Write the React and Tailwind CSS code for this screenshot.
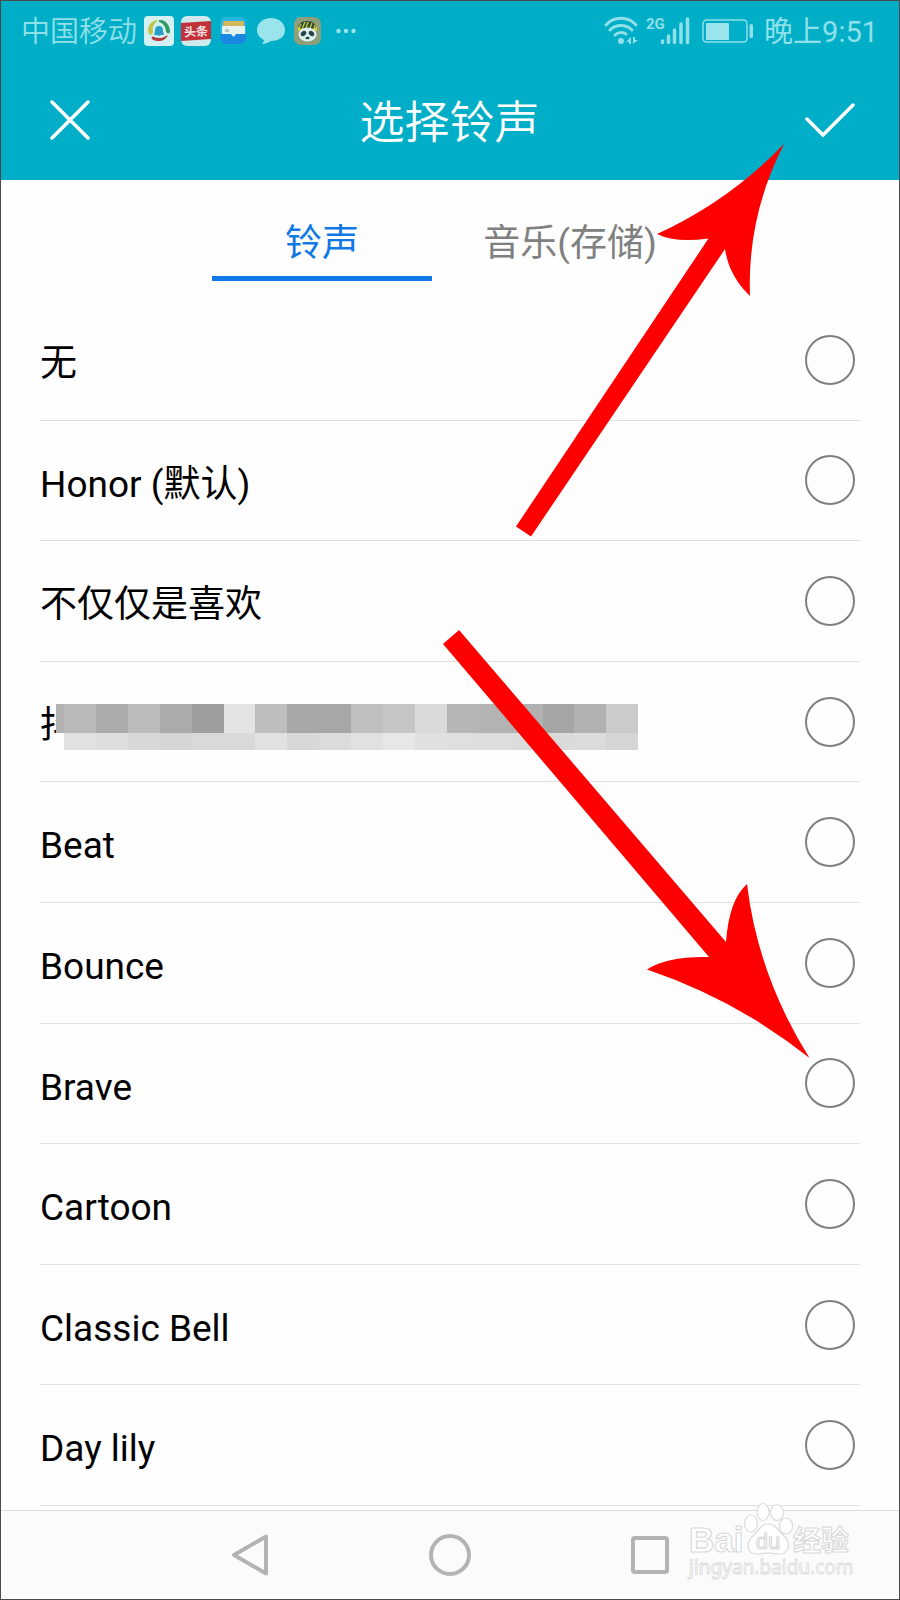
import { useState } from "react";

const RINGTONES = [
  { id: "none", label: "无" },
  { id: "honor", label: "Honor (默认)" },
  { id: "like", label: "不仅仅是喜欢" },
  { id: "hidden", label: "抖", masked: true },
  { id: "beat", label: "Beat" },
  { id: "bounce", label: "Bounce" },
  { id: "brave", label: "Brave" },
  { id: "cartoon", label: "Cartoon" },
  { id: "classic", label: "Classic Bell" },
  { id: "daylily", label: "Day lily" },
];

const MOSAIC_TOP = [
  "#b9b9b9", "#ababab", "#bcbcbc", "#ababab", "#9e9e9e", "#e3e3e3", "#bebebe", "#a7a7a7", "#a7a7a7",
  "#bfbfbf", "#c5c5c5", "#dadada", "#b6b6b6", "#b3b3b3", "#b1b1b1", "#a6a6a6", "#b1b1b1", "#cbcbcb",
];
const MOSAIC_BOTTOM = [
  "#e1e1e1", "#dedede", "#d8d8d8", "#d5d5d5", "#d9d9d9", "#d9d9d9", "#e1e1e1", "#d7d7d7", "#dbdbdb",
  "#e1e1e1", "#e7e7e7", "#e0e0e0", "#dfdfdf", "#dddddd", "#dcdcdc", "#dadada", "#dcdcdc", "#d5d5d5",
];

function Mosaic() {
  return (
    <svg
      viewBox="0 0 582 56"
      className="absolute top-0 left-4 h-14 w-[582px] max-w-none"
      shapeRendering="crispEdges"
      aria-hidden="true"
    >
      <rect x="0" y="10" width="8" height="29" fill="#b2b2b2" />
      <rect x="0" y="39" width="8" height="17" fill="#fefefe" />
      {MOSAIC_TOP.map((c, i) => (
        <rect key={i} x={8 + i * 31.9} y="10" width="32" height="29" fill={c} />
      ))}
      {MOSAIC_BOTTOM.map((c, i) => (
        <rect key={i} x={8 + i * 31.9} y="39" width="32" height="17" fill={c} />
      ))}
    </svg>
  );
}

function AppIcons() {
  return (
    <div className="flex items-center gap-[7px]" aria-hidden="true">
      <svg viewBox="0 0 30 30" className="size-[30px]">
        <rect width="30" height="30" rx="4" fill="#d3f1f3" />
        <path d="M5 18 C2 11 7 4 14 4 C10 8 8 11 9 16 C8 19 6 20 5 18Z" fill="#c3c44a" />
        <path d="M15 4 C21 3 26 9 26 15 C26 18 24 18 22 16 C22 11 19 7 15 6Z" fill="#2f9a62" />
        <path d="M24 19 C22 25 13 27 8 23 C7 21 8 20 10 21 C15 23 19 22 22 20Z" fill="#b5383d" />
        <path d="M15 10 C18 10 19 12 19 15 L20 19 H17 L15 20 L13 19 H10 L11 15 C11 12 12 10 15 10Z" fill="#279fc6" />
      </svg>
      <svg viewBox="0 0 30 30" className="size-[30px]">
        <rect width="30" height="30" rx="6" fill="#cfe9ec" />
        <path d="M0 7 L30 5 V23 L0 25Z" fill="#c23038" />
        <text x="15" y="20" textAnchor="middle" fontSize="12" fontWeight="700" fill="#f3e4e5" transform="rotate(-3 15 15)">
          头条
        </text>
      </svg>
      <svg viewBox="0 0 30 30" className="size-[30px]">
        <rect x="2" y="1" width="26" height="27" rx="6" fill="#27b4e0" />
        <rect x="5" y="5" width="21" height="7" rx="1" fill="#d2b95c" />
        <path d="M4 10 H27 V19 H4Z" fill="#e6f4f1" />
        <rect x="7" y="13" width="4" height="3" fill="#b9c6c2" />
        <path d="M2 18 H28 V22 A6 6 0 0 1 22 28 H8 A6 6 0 0 1 2 22Z" fill="#1888e0" />
        <path d="M12.500 17.500 H18.500 L15.500 21Z" fill="#e6f4f1" />
      </svg>
      <svg viewBox="0 0 30 30" className="size-[30px]">
        <path d="M16 2 C24 2 30 7 30 14 C30 21 24 25 16 25 C13 27 10 28 7 28 C8 27 9 25 9 24 C5 22 2 19 2 14 C2 7 8 2 16 2Z" fill="#9ae4eb" />
      </svg>
      <svg viewBox="0 0 30 30" className="size-[30px]">
        <rect x="2" y="1" width="27" height="28" rx="7" fill="#8f9f7a" />
        <path d="M6 15 C5 8 10 5 15 5 C21 5 25 8 24 15Z" fill="#334531" />
        <path d="M6 14 L9 8 M10 13 L13 6 M14 12 L16 6 M18 12 L20 7 M22 13 L23 9" stroke="#b5c747" strokeWidth="1.500" />
        <path d="M6 11 L10 13 H20 L25 11 V15 H6Z" fill="#d5cb3e" />
        <ellipse cx="15.500" cy="18.500" rx="9" ry="7" fill="#dcefed" />
        <ellipse cx="11.500" cy="17.500" rx="3" ry="2.300" fill="#27424a" transform="rotate(-40 11.500 17.500)" />
        <ellipse cx="19.500" cy="17.500" rx="3" ry="2.300" fill="#27424a" transform="rotate(40 19.500 17.500)" />
        <ellipse cx="15.500" cy="22" rx="2" ry="1.200" fill="#27424a" />
      </svg>
      <svg viewBox="0 0 30 30" className="size-[30px]" fill="#9ae4eb">
        <circle cx="9.500" cy="15" r="2.200" />
        <circle cx="17" cy="15" r="2.200" />
        <circle cx="24.500" cy="15" r="2.200" />
      </svg>
    </div>
  );
}

function StatusIcons() {
  return (
    <svg viewBox="0 0 150 30" className="h-[30px] w-[150px] overflow-visible" aria-hidden="true">
      <g fill="none" stroke="#8fe0e8" strokeWidth="3" strokeLinecap="round">
        <path d="M2 9 C10 0 24 0 32 9" />
        <path d="M6 14 C12 8 22 8 28 14" />
        <path d="M11 19 C14 16 19 16 22 18" />
      </g>
      <circle cx="17" cy="25" r="3" fill="#8fe0e8" />
      <path d="M25 21 V28 H27 V21 L22 26 H25 M29 28 V21 H31 V24 H34 L29 28Z" fill="#8fe0e8" />
      <text x="42" y="13" fontSize="15" fontWeight="700" fontFamily="'Liberation Sans Narrow', Roboto, sans-serif" fill="#8fe0e8">
        2G
      </text>
      <path
        d="M58.500 25 V26.500 M64.500 20 V26.500 M70.500 14 V26.500 M77 8 V26.500 M83.500 3 V26.500"
        stroke="#8fe0e8"
        strokeWidth="3.500"
        strokeLinecap="round"
      />
      <rect x="99" y="4" width="44" height="22" rx="3.500" fill="none" stroke="#8fe0e8" strokeWidth="1.500" />
      <rect x="102" y="7" width="23" height="17" rx="1" fill="#9ae4eb" />
      <rect x="145.500" y="8" width="3.500" height="14" rx="1.500" fill="#8fe0e8" />
    </svg>
  );
}

function Arrows() {
  return (
    <svg
      viewBox="1 1 898 1598"
      preserveAspectRatio="none"
      className="pointer-events-none absolute inset-0 h-full w-full"
      fill="#ff0000"
      aria-hidden="true"
    >
      <path d="M784 144 Q729 201 657 234 Q675 243 708.500 238.500 L516 526.500 L531 536.500 L725 249 Q729 276 750 296 Q747 216 784 144Z" />
      <path d="M809.500 1058 Q737 1000 647 969.500 Q667 956 709 957 L443 644 L459 630 L726 942 Q729 900 747 884 Q758 976 809.500 1058Z" />
    </svg>
  );
}

function Watermark() {
  return (
    <svg
      viewBox="0 0 170 84"
      className="pointer-events-none absolute right-[43px] bottom-[15px] h-[84px] w-[170px]"
      fill="#ffffff"
      stroke="#dadada"
      strokeWidth="1.200"
    >
      <text x="3" y="52" fontSize="35" fontWeight="700" fontFamily="'Liberation Sans', sans-serif">Bai</text>
      <ellipse cx="65" cy="23.500" rx="6.500" ry="8.500" />
      <ellipse cx="77" cy="12" rx="6" ry="8.500" />
      <ellipse cx="91" cy="12.500" rx="6.500" ry="8" />
      <ellipse cx="100" cy="26" rx="6.500" ry="8" />
      <path d="M82 24 C90 24 92 31 98 36 C105 42 104 54 93 54 C88 54 86 53 82 53 C78 53 76 54 71 54 C60 54 60 42 67 36 C73 31 74 24 82 24Z" />
      <text x="82" y="49" fontSize="22" textAnchor="middle" fontFamily="'Liberation Sans', sans-serif">du</text>
      <text x="107" y="51" fontSize="28" fontWeight="700" fontFamily="'Noto Sans CJK SC', sans-serif">经验</text>
      <text x="3" y="74" fontSize="19" strokeWidth="0.800" fontFamily="'Noto Sans', sans-serif">jingyan.baidu.com</text>
    </svg>
  );
}

export default function App() {
  const [tab, setTab] = useState("ring");
  const [choice, setChoice] = useState("");

  return (
    <div className="relative flex min-h-screen flex-col border border-[#4a4a4a] bg-[#fefefe] font-['Roboto','Noto_Sans_CJK_SC',sans-serif] text-black">
      <header className="bg-[#00aec7]">
        <div className="flex h-[59px] items-center justify-between pr-[21px] pl-5 text-[29px] text-[#8fe0e8]">
          <div className="flex items-center gap-[7px]">
            <span className="pt-1 font-[350]">中国移动</span>
            <AppIcons />
          </div>
          <div className="flex items-center gap-[10px]">
            <StatusIcons />
            <span className="pt-1">晚上9:51</span>
          </div>
        </div>
        <div className="flex h-[120px] items-center justify-between pr-11 pl-[49px] text-white">
          <button type="button" aria-label="取消" className="w-11">
            <svg viewBox="0 0 40 40" className="size-10" fill="none" stroke="currentColor" strokeWidth="3.500" strokeLinecap="round">
              <path d="M2 2 L38 38 M38 2 L2 38" />
            </svg>
          </button>
          <h1 className="pt-2 text-[45px] font-[350]">选择铃声</h1>
          <button type="button" aria-label="确定">
            <svg viewBox="0 0 50 40" className="h-10 w-[50px]" fill="none" stroke="currentColor" strokeWidth="3.500" strokeLinecap="round">
              <path d="M2 19 L18 35 L48 5" />
            </svg>
          </button>
        </div>
      </header>

      <div role="tablist" className="flex h-[120px] items-start justify-center gap-7 pr-2 text-[37px]">
        <button
          type="button"
          role="tab"
          aria-selected={tab === "ring"}
          onClick={() => setTab("ring")}
          className={`h-[101px] w-[220px] border-b-[5px] pt-8 ${tab === "ring" ? "border-[#1079e6] text-[#1079e6]" : "border-transparent text-[#808080]"}`}
        >
          铃声
        </button>
        <button
          type="button"
          role="tab"
          aria-selected={tab === "music"}
          onClick={() => setTab("music")}
          className={`h-[101px] w-[220px] border-b-[5px] pt-8 ${tab === "music" ? "border-[#1079e6] text-[#1079e6]" : "border-transparent text-[#808080]"}`}
        >
          音乐(存储)
        </button>
      </div>

      <main className="grid flex-1 auto-rows-fr px-[39px] pb-1 text-[37px]">
        {RINGTONES.map((r) => (
          <label key={r.id} className="flex items-center justify-between border-b border-[#e2e2e2] pr-[5px]">
            <span className="relative flex h-14 items-center">
              <span className="pt-2">{r.label}</span>
              {r.masked && <Mosaic />}
            </span>
            <input
              type="radio"
              name="ringtone"
              value={r.id}
              checked={choice === r.id}
              onChange={() => setChoice(r.id)}
              className="size-[50px] shrink-0 appearance-none rounded-full border-2 border-[#7f7f7f] checked:border-[14px] checked:border-[#1079e6]"
            />
          </label>
        ))}
      </main>

      <nav className="flex h-[89px] items-center justify-center border-t border-[#dcdcdc] bg-[#fbfbfb]">
        <button type="button" aria-label="返回" className="flex w-[200px] justify-center">
          <svg viewBox="0 0 44 44" className="size-11" fill="none" stroke="#b3b3b3" strokeWidth="4" strokeLinejoin="round">
            <path d="M6 22 L38 3.500 V40.500Z" />
          </svg>
        </button>
        <button type="button" aria-label="主页" className="flex w-[200px] justify-center">
          <svg viewBox="0 0 44 44" className="size-11" fill="none" stroke="#b3b3b3" strokeWidth="4">
            <circle cx="22" cy="22" r="19" />
          </svg>
        </button>
        <button type="button" aria-label="最近任务" className="flex w-[200px] justify-center">
          <svg viewBox="0 0 44 44" className="size-11" fill="none" stroke="#b3b3b3" strokeWidth="4">
            <rect x="5" y="5" width="34" height="34" rx="2" />
          </svg>
        </button>
      </nav>

      <Watermark />
      <Arrows />
    </div>
  );
}
